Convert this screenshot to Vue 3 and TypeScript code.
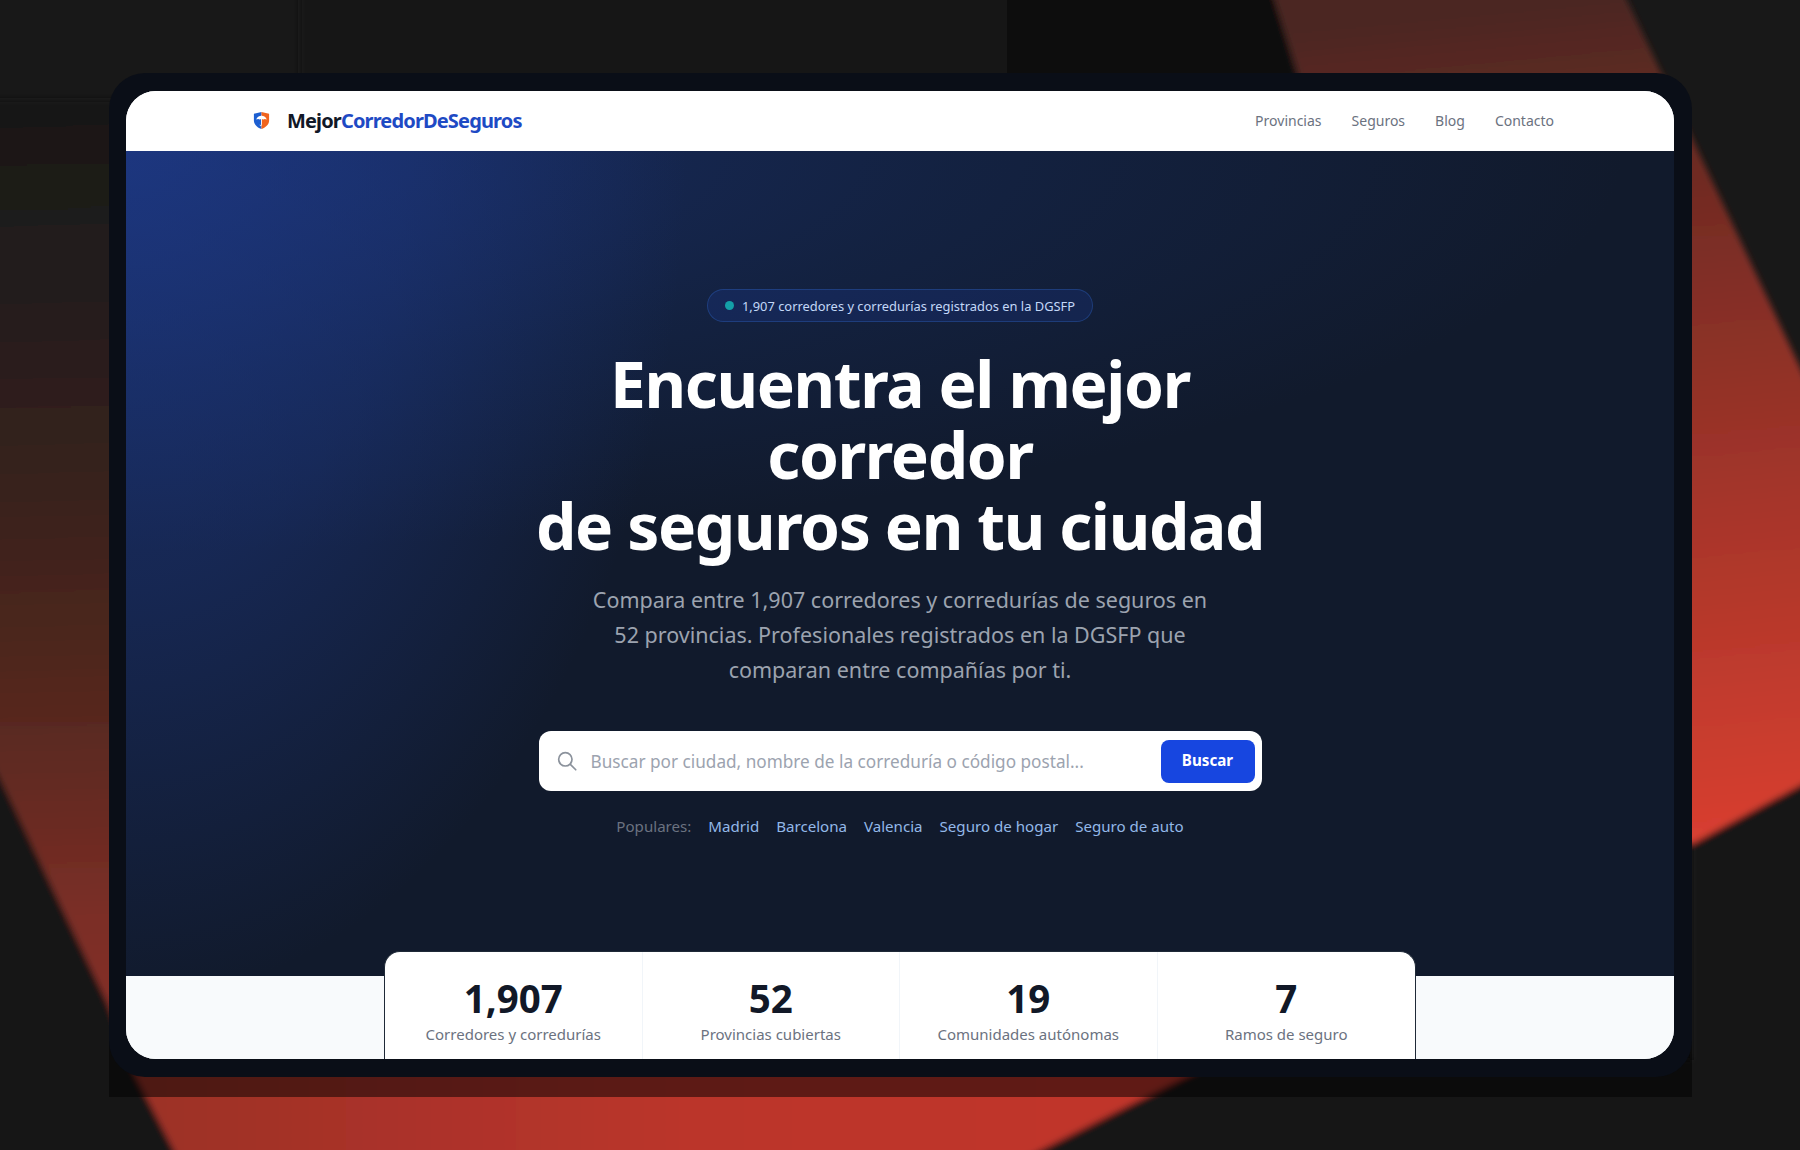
<script setup lang="ts">
const navLinks = ['Provincias', 'Seguros', 'Blog', 'Contacto']
const popular = ['Madrid', 'Barcelona', 'Valencia', 'Seguro de hogar', 'Seguro de auto']
const stats = [
  { value: '1,907', label: 'Corredores y corredurías' },
  { value: '52', label: 'Provincias cubiertas' },
  { value: '19', label: 'Comunidades autónomas' },
  { value: '7', label: 'Ramos de seguro' },
]
</script>

<template>
  <div class="stage">
    <svg class="backdrop" viewBox="0 0 1800 1150" preserveAspectRatio="none" aria-hidden="true">
      <defs>
        <filter id="soft" filterUnits="userSpaceOnUse" x="-60" y="-60" width="1920" height="1270"><feGaussianBlur stdDeviation="3" /></filter>
        <linearGradient id="redRight" gradientUnits="userSpaceOnUse" x1="1620" y1="0" x2="1700" y2="840">
          <stop offset="0" stop-color="#4c2620" />
          <stop offset="0.09" stop-color="#5c2a22" />
          <stop offset="0.25" stop-color="#752c24" />
          <stop offset="0.6" stop-color="#a5352a" />
          <stop offset="1" stop-color="#d83f30" />
        </linearGradient>
        <linearGradient id="redLeft" gradientUnits="userSpaceOnUse" x1="0" y1="100" x2="20" y2="1000">
          <stop offset="0" stop-color="#181818" />
          <stop offset="0.22" stop-color="#241d1b" />
          <stop offset="0.45" stop-color="#3a221e" />
          <stop offset="0.67" stop-color="#55281f" />
          <stop offset="0.9" stop-color="#7a2e26" />
          <stop offset="1" stop-color="#832f27" />
        </linearGradient>
        <linearGradient id="redBottom" gradientUnits="userSpaceOnUse" x1="140" y1="0" x2="1060" y2="0">
          <stop offset="0" stop-color="#9c3128" />
          <stop offset="0.6" stop-color="#bb352a" />
          <stop offset="1" stop-color="#c0362a" />
        </linearGradient>
        <linearGradient id="topShade" gradientUnits="userSpaceOnUse" x1="300" y1="0" x2="1290" y2="0">
          <stop offset="0" stop-color="#181818" />
          <stop offset="0.7" stop-color="#121212" />
          <stop offset="1" stop-color="#0a0a0a" />
        </linearGradient>
        <linearGradient id="lowShade" gradientUnits="userSpaceOnUse" x1="0" y1="800" x2="0" y2="1100">
          <stop offset="0" stop-color="#181818" />
          <stop offset="1" stop-color="#121212" />
        </linearGradient>
      </defs>
      <rect width="1800" height="1150" fill="#181818" />
      <g filter="url(#soft)">
        <polygon points="300,-40 1262,-40 1300,90 300,90" fill="url(#topShade)" />
        <polygon points="1262,-40 1608,-40 1840,452 1840,764 1692,844 1300,844 1300,80" fill="url(#redRight)" />
        <polygon points="-40,100 130,100 130,1090 -40,1090" fill="url(#redLeft)" />
        <polygon points="120,1060 1219,1060 1002,1170 120,1170" fill="url(#redBottom)" />
        <polygon points="-40,700 0,778 107,1002 136,1077 184,1170 -40,1170" fill="#181818" />
        <polygon points="1692,844 1840,764 1840,1170 1002,1170 1219,1060 1692,1060" fill="url(#lowShade)" />
      </g>
      <rect x="109" y="1040" width="1583" height="57" fill="#000" opacity="0.5" />
    </svg>
    <main class="frame">
      <div class="window">
        <header class="nav">
          <div class="brand">
            <svg class="shield" viewBox="0 0 20 20" aria-hidden="true">
              <path d="M10 1 L2 3 V10 C2 14.500 6 17.500 10 19 Z" fill="#1d5fd1" />
              <path d="M10 1 L18 3 V10 C18 14.500 14 17.500 10 19 Z" fill="#f0641e" />
              <path d="M4.500 9 C5 6.500 7.500 5 10 5 C12.500 5 15 6.500 15.500 9 L13.500 8.300 L12 9 L10 8.300 L8 9 L6.500 8.300 Z" fill="#fff" />
              <path d="M10 5 V14.500 C10 15.800 8.500 15.800 8.500 14.500" fill="none" stroke="#fff" stroke-width="0.900" />
            </svg>
            <span class="word"><span class="dark">Mejor</span><span class="blue">CorredorDeSeguros</span></span>
          </div>
          <nav class="links">
            <a v-for="l in navLinks" :key="l">{{ l }}</a>
          </nav>
        </header>
        <section class="hero">
          <div class="pill"><i class="dot"></i>1,907 corredores y corredurías registrados en la DGSFP</div>
          <h1>Encuentra el mejor<br />corredor<br />de seguros en tu ciudad</h1>
          <p class="lead">Compara entre 1,907 corredores y corredurías de seguros en 52 provincias. Profesionales registrados en la DGSFP que comparan entre compañías por ti.</p>
          <div class="search">
            <svg class="mag" viewBox="0 0 24 24" aria-hidden="true">
              <circle cx="10" cy="10" r="8" fill="none" stroke="#8b929c" stroke-width="2" />
              <path d="M16 16 L22.500 22.500" stroke="#8b929c" stroke-width="2" stroke-linecap="round" />
            </svg>
            <span class="placeholder">Buscar por ciudad, nombre de la correduría o código postal...</span>
            <button class="go" type="button">Buscar</button>
          </div>
          <div class="popular">
            <span class="pop-label">Populares:</span>
            <a v-for="p in popular" :key="p">{{ p }}</a>
          </div>
        </section>
        <section class="lower">
          <div class="stats">
            <div v-for="s in stats" :key="s.label" class="stat">
              <strong>{{ s.value }}</strong>
              <span>{{ s.label }}</span>
            </div>
          </div>
        </section>
      </div>
    </main>
  </div>
</template>

<style>
html, body { margin: 0; background: #181818; }
</style>

<style scoped>
.stage {
  position: relative;
  width: 1800px;
  height: 1150px;
  overflow: hidden;
  font-family: "Noto Sans", sans-serif;
  display: flex;
  justify-content: flex-start;
  padding: 73px 0 0 109px;
  box-sizing: border-box;
}
.backdrop { position: absolute; inset: 0; width: 100%; height: 100%; }
.frame {
  position: relative;
  width: 1583px;
  height: 1004px;
  box-sizing: border-box;
  padding: 18px 18px 18px 17px;
  background: #0a0e17;
  border-radius: 36px;
}
.window {
  height: 968px;
  border-radius: 30px;
  overflow: hidden;
  display: flex;
  flex-direction: column;
  background: #f8fafc;
}
.nav {
  flex: none;
  height: 60px;
  box-sizing: border-box;
  padding: 0 120px 2px 126px;
  background: #fff;
  display: flex;
  align-items: center;
  justify-content: space-between;
}
.brand { display: flex; align-items: center; gap: 16px; }
.shield { width: 19px; height: 19px; }
.word { font-size: 20px; font-weight: 700; letter-spacing: -0.85px; }
.dark { color: #111827; }
.blue { color: #1e4ac4; }
.links { display: flex; gap: 30px; font-size: 14px; color: #6b7280; }
.hero {
  flex: none;
  height: 825px;
  box-sizing: border-box;
  padding-top: 138px;
  display: flex;
  flex-direction: column;
  align-items: center;
  background:
    radial-gradient(ellipse 560px 850px at 0 0, rgba(30, 58, 138, 0.7) 0%, rgba(30, 58, 138, 0.42) 50%, transparent 100%),
    radial-gradient(ellipse 1500px 400px at 0 0, rgba(30, 58, 138, 0.6) 0%, rgba(24, 50, 110, 0.32) 55%, transparent 100%),
    #111a2c;
}
.pill {
  height: 33px;
  box-sizing: border-box;
  padding: 0 16.500px;
  display: flex;
  align-items: center;
  gap: 8px;
  border-radius: 17px;
  border: 1px solid rgba(59, 130, 246, 0.25);
  background: rgba(30, 64, 175, 0.2);
  color: #c3d8f8;
  font-size: 12.900px;
}
.dot { width: 9px; height: 9px; border-radius: 50%; background: #14a0a8; }
h1 {
  margin: 26px 0 0;
  color: #fff;
  font-size: 64px;
  line-height: 71px;
  font-weight: 700;
  letter-spacing: -1.350px;
  text-align: center;
}
.lead {
  margin: 21px 0 0;
  width: 640px;
  color: #9ca3af;
  font-size: 21.500px;
  line-height: 35px;
  text-align: center;
}
.search {
  margin-top: 44px;
  width: 723px;
  height: 60px;
  box-sizing: border-box;
  padding: 0 7px 0 18px;
  border-radius: 12px;
  background: #fff;
  display: flex;
  align-items: center;
}
.mag { width: 20px; height: 20px; }
.placeholder { flex: 1; margin-left: 14px; color: #9ca3af; font-size: 17.200px; }
.go {
  width: 94px;
  height: 43px;
  border: 0;
  border-radius: 8px;
  padding: 0 0 2px;
  background: #1746e0;
  color: #fff;
  font: 700 15.200px "Noto Sans", sans-serif;
}
.popular { margin-top: 25px; display: flex; gap: 17px; font-size: 15.100px; color: #93b8e8; }
.pop-label { color: #6b7280; }
.lower { flex: 1; display: flex; justify-content: center; background: #f8fafc; position: relative; }
.stats {
  margin-top: -25px;
  width: 1032px;
  height: 140px;
  flex: none;
  box-sizing: border-box;
  display: grid;
  grid-template-columns: repeat(4, 1fr);
  background: #fff;
  border: 1px solid #1f2937;
  border-bottom: 0;
  border-radius: 16px 16px 0 0;
}
.stat {
  display: flex;
  flex-direction: column;
  align-items: center;
  padding-top: 23px;
  border-right: 1px solid #f1f5f9;
}
.stat:last-child { border-right: 0; }
.stat strong { font-size: 38.500px; line-height: 47px; font-weight: 700; color: #111827; }
.stat span { font-size: 15px; line-height: 24px; color: #6b7280; }
</style>
